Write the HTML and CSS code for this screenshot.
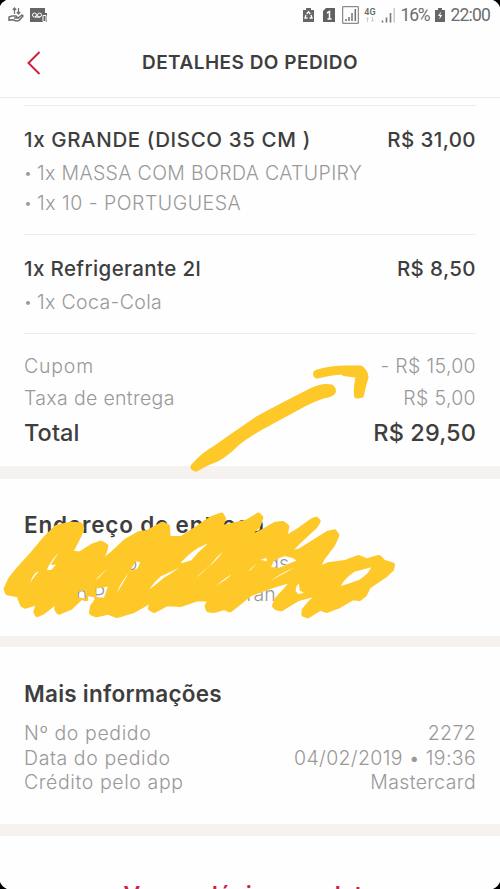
FILE: index.html
```html
<!DOCTYPE html>
<html lang="pt-BR">
<head>
<meta charset="utf-8">
<title>Detalhes do pedido</title>
<link rel="stylesheet" href="styles.css">
</head>
<body>
<div class="screen">
  <div class="status">
    <svg class="status-left" width="42" height="18" viewBox="0 0 42 18" fill="none" stroke="#707070">
      <path d="M6.500 8V2M4.800 4L6.500 2l1.700 2M10.500 2v6M8.800 6l1.700 2 1.700-2" stroke-width="1.200"/>
      <path d="M1 15v-4l3-1h4l2 2H6M1 14l4-.3 3 1.300 3-.5 4-4.500-1-1-4 3" stroke-width="1.500"/>
      <path d="M22 2h15v5h2v9H22z" fill="#666" stroke="none"/>
      <path d="M27 11h5" stroke="#fff" stroke-width="1.200"/><circle cx="26.500" cy="9" r="2" stroke="#fff"/><circle cx="31.500" cy="9" r="2" stroke="#fff"/>
      <path d="M35 9.500h3v6h-3z" fill="#666" stroke="#fff"/>
    </svg>
    <div class="status-right">
      <svg width="11" height="14" viewBox="0 0 11 14"><path d="M3 0h5v2h3v12H0V2h3z" fill="#666"/><path d="M3.700 6l1.800-2.300L7.300 6M8 7l1 3H6.500M4.500 10H2l1-3" fill="none" stroke="#fff" stroke-width="1.300"/></svg>
      <svg class="sim" width="12" height="14" viewBox="0 0 12 14"><path d="M3 0h9v14H0V3z" fill="#606060"/><path d="M4 5l2.500-1.500V11M4.500 11h4" fill="none" stroke="#fff" stroke-width="1.500"/></svg>
      <svg class="signal" width="17" height="18" viewBox="0 0 17 18" fill="none" stroke="#707070"><path d="M.7.7h15.600v16.600H.7z"/><path d="M4 15v-2M7 15v-4M10 15V7M13.300 15V3" stroke-width="1.500"/></svg>
      <div class="net"><span>4G</span><svg width="8" height="5" viewBox="0 0 8 5" fill="#ccc"><path d="M0 2l1.500-2L3 2H2v3H1V2zM5 3h1V0h1v3h1L6.500 5z"/></svg></div>
      <svg class="bars" width="14" height="15" viewBox="0 0 14 15" fill="none" stroke="#777" stroke-width="1.600"><path d="M1.500 14.500v-2M5.500 14.500v-5M9.500 14.500V5"/><path d="M13.200 14.500V0" stroke="#ccc"/></svg>
      <span class="pct">16%</span>
      <svg class="battery" width="10" height="14" viewBox="0 0 10 14"><path d="M3 0h4v2h3v12H0V2h3z" fill="#666"/><path d="M6 3.500L3 8h2l-.7 3.500L7.200 7H5.300z" fill="#fff"/></svg>
      <span class="clock">22:00</span>
    </div>
  </div>
  <header class="header">
    <svg class="back" width="14" height="24" viewBox="0 0 14 24"><path d="M12.500 1L1.500 12l11 11" fill="none" stroke="#d0203c" stroke-width="2"/></svg>
    <h1>DETALHES DO PEDIDO</h1>
  </header>
  <main>
    <section class="item first">
      <div class="row name"><span class="pizza">1x GRANDE (DISCO 35 CM )</span><span class="price">R$ 31,00</span></div>
      <p class="sub"><span class="dot">•</span>1x MASSA COM BORDA CATUPIRY</p>
      <p class="sub wide"><span class="dot">•</span>1x 10 - PORTUGUESA</p>
    </section>
    <section class="item">
      <div class="row name"><span class="drink">1x Refrigerante 2l</span><span class="price">R$ 8,50</span></div>
      <p class="sub"><span class="dot">•</span>1x Coca-Cola</p>
    </section>
    <section class="totals">
      <div class="row"><span class="coupon">Cupom</span><span>- R$ 15,00</span></div>
      <div class="row"><span>Taxa de entrega</span><span>R$ 5,00</span></div>
      <div class="row total"><span>Total</span><span>R$ 29,50</span></div>
    </section>
    <section class="address">
      <h2>Endereço de entrega</h2>
      <p class="line"><span class="a1">ão</span><span class="a2">gs</span></p>
      <p class="line"><span class="b1">n P</span><span class="b2">mp</span><span class="b3">Gran e</span></p>
    </section>
    <section class="info">
      <h2>Mais informações</h2>
      <div class="row"><span>Nº do pedido</span><span class="value">2272</span></div>
      <div class="row"><span>Data do pedido</span><span class="value">04/02/2019 • 19:36</span></div>
      <div class="row"><span>Crédito pelo app</span><span class="value">Mastercard</span></div>
    </section>
    <div class="link"><a>Ver cardápio completo</a></div>
  </main>
  <svg class="ink" width="500" height="889" viewBox="0 0 500 889">
    <path fill="#fdc828" stroke="#fdc828" stroke-linejoin="round" stroke-width="7" d="M194 467Q203 456 217 448Q240 432 259 419Q293 401 313 391Q323 386 331 388Q335 392 328 394Q320 395 306 402Q284 414 269 422Q251 431 237 442Q226 453 217 458Q206 462 196 468Z"/>
    <path fill="none" stroke="#fdc828" stroke-linecap="round" stroke-linejoin="round" stroke-width="9" d="M317.500 374Q332 370 346 370L360 370"/>
    <path fill="#fdc828" stroke="#fdc828" stroke-linejoin="round" stroke-width="6" d="M344 369H360Q365 371 365.500 377Q363 385 361 395L357 395.500Q356 388 359 375L344 373Z"/>
    <g transform="translate(0 490) scale(.33333)">
      <mask id="gaps" maskUnits="userSpaceOnUse" x="0" y="0" width="1300" height="450">
      <path fill="#fff" stroke="#fff" stroke-linejoin="round" stroke-width="16" d="M19 297L32 268 57 237 98 192 137 145 170 113 210 103 240 105 245 115 237 136 210 188 240 193 279 168 303 160 317 168 312 188 278 239 335 194 377 155 416 132 443 128 488 103 502 110 504 145 545 146 594 114 635 86 664 76 670 86 658 115 742 96 775 76 782 83 775 105 725 155 755 142 796 121 827 103 848 101 860 110 856 130 835 160 900 119 938 92 949 88 954 94 945 108 895 155 858 192 900 183 985 130 1003 126 1010 136 998 163 966 205 950 241 985 225 1035 218 1075 203 1100 213 1137 203 1150 217 1177 225 1174 237 1154 256 1105 289 1093 314 1078 325 1057 323 1016 347 980 361 960 354 923 377 912 373 913 361 932 338 970 305 895 325 843 356 830 353 824 347 832 328 858 300 888 265 815 287 750 311 690 359 672 352 640 361 625 359 622 348 635 327 590 326 543 343 500 341 462 361 452 355 460 327 400 361 350 376 325 366 290 374 275 368 278 350 304 315 255 310 211 352 177 366 171 358 175 330 128 366 112 373 108 366 117 335 77 348 68 344 57 315 23 308Z"/>
      <path fill="#000" stroke="#fff" stroke-width="6" stroke-linejoin="round" d="M87 281Q93 255 110 242L124 242Q103 260 94 280ZM136 243Q150 205 190 172Q172 200 157 222L176 219 156 242Z
        M270 288Q290 258 326 229Q365 195 395 173Q385 192 349 213L324 238Q300 267 270 288ZM340 329Q349 295 370 265L389 238 407 210 425 215 414 238 391 245Q370 287 340 329Z
        M410 186Q445 151 484 141Q462 159 440 164Q421 176 410 186ZM438 308Q453 281 480 257Q515 242 554 221Q530 245 493 266Q465 291 438 308Z
        M536 222Q553 197 591 172L638 150Q619 171 598 188L575 214 548 222ZM565 280Q595 252 626 226Q650 195 682 168Q664 205 624 236Q599 263 565 280Z
        M630 305Q655 269 706 243Q695 262 665 280ZM738 245L778 208 802 200 804 218 781 212 752 244Z
        M783 291Q822 256 882 229L922 209Q880 240 846 257Q812 276 783 291ZM809 234L820 208 853 195 878 201 896 212 840 236Z
        M1016 293Q1030 263 1063 242L1118 227Q1114 249 1080 272Q1048 284 1016 293ZM884 304Q883 284 899 276L902 300 920 310 894 316Z
        M230 303L258 296 262 330 232 325ZM283 294L328 286 314 326 286 324Z"/>
      </mask>
      <path fill="#fdc828" mask="url(#gaps)" d="M0 0h1300v450H0z"/>
    </g>
    <path fill="#000" d="M0 0h6Q2 2 0 6zM500 0h-7q5 2 7 7zM0 889v-7q2 5 7 7zM500 889v-7q-2 5-7 7z"/>
  </svg>
</div>
</body>
</html>
```
FILE: styles.css
```css
* { box-sizing: border-box; }
body { margin: 0; background: #fff; font-family: Inter, "Liberation Sans", sans-serif; font-feature-settings: "calt" 0; }
h1, h2, p { margin: 0; }
.screen { position: relative; width: 500px; height: 889px; overflow: hidden; background: #fefefe; color: #3e3e3e; }
.status { height: 29px; padding: 6px 10px 0 8px; display: flex; justify-content: space-between; color: #6c6c6c; }
.status-right { display: flex; align-items: center; height: 18px; font-family: Roboto, sans-serif; font-size: 17.5px; }
.sim { margin-left: 9px; }
.signal { margin-left: 7px; }
.net { display: flex; flex-direction: column; align-items: center; margin-left: 5px; font-size: 9px; line-height: 8px; font-weight: 600; gap: 1px; }
.bars { margin-left: 5px; }
.pct { margin-left: 6px; letter-spacing: -1.2px; }
.battery { margin-left: 6px; }
.clock { margin-left: 5px; letter-spacing: -.8px; }
.header { position: relative; height: 69px; border-bottom: 1px solid #ececec; display: flex; align-items: center; justify-content: center; }
.header h1 { font-size: 19px; font-weight: 600; line-height: 24px; letter-spacing: .47px; }
.back { position: absolute; left: 27px; top: 22px; }
.row { display: flex; justify-content: space-between; white-space: nowrap; }
.item { margin: 0 24px; padding: 20px 0 16px; border-bottom: 1px solid #ededed; }
.first { margin-top: 7px; border-top: 1px solid #ededed; }
.name { font-size: 20.5px; line-height: 28px; font-weight: 500; margin-bottom: 4px; }
.pizza { letter-spacing: .62px; }
.drink { letter-spacing: .38px; }
.price { letter-spacing: .4px; }
.sub { display: flex; font-size: 19.5px; line-height: 30px; font-weight: 300; color: #999; white-space: nowrap; letter-spacing: .35px; }
.wide { letter-spacing: .5px; }
.dot { width: 13px; font-size: 14px; }
.totals { padding: 16px 24px 14px; font-size: 19.5px; line-height: 32px; font-weight: 300; color: #999; border-bottom: 13px solid #f6f2ef; letter-spacing: .33px; }
.coupon { letter-spacing: .8px; }
.total { font-size: 23.5px; line-height: 38px; font-weight: 500; color: #3e3e3e; letter-spacing: .1px; }
h2 { font-size: 22.5px; line-height: 30px; font-weight: 600; letter-spacing: .25px; }
.address { height: 168px; padding: 31px 24px 0; border-bottom: 11px solid #f6f2ef; }
.address h2 { margin-bottom: 8px; letter-spacing: .8px; }
.line { display: flex; font-size: 19.5px; line-height: 31px; font-weight: 300; color: #999; }
.a1 { margin-left: 91px; }
.a2 { margin-left: 130px; }
.b1 { margin-left: 52px; }
.b2 { margin-left: 88px; }
.b3 { margin-left: 10px; }
.info { height: 189px; padding: 32px 24px 0; font-size: 19.5px; line-height: 24.5px; font-weight: 300; color: #999; letter-spacing: .6px; border-bottom: 12px solid #f6f2ef; }
.info h2 { color: #3e3e3e; margin-bottom: 12px; }
.value { letter-spacing: .35px; }
.link { padding-top: 47px; text-align: center; font-size: 23px; line-height: 24px; font-weight: 600; color: #d0203c; letter-spacing: .1px; white-space: nowrap; }
.ink { position: absolute; left: 0; top: 0; }
```
